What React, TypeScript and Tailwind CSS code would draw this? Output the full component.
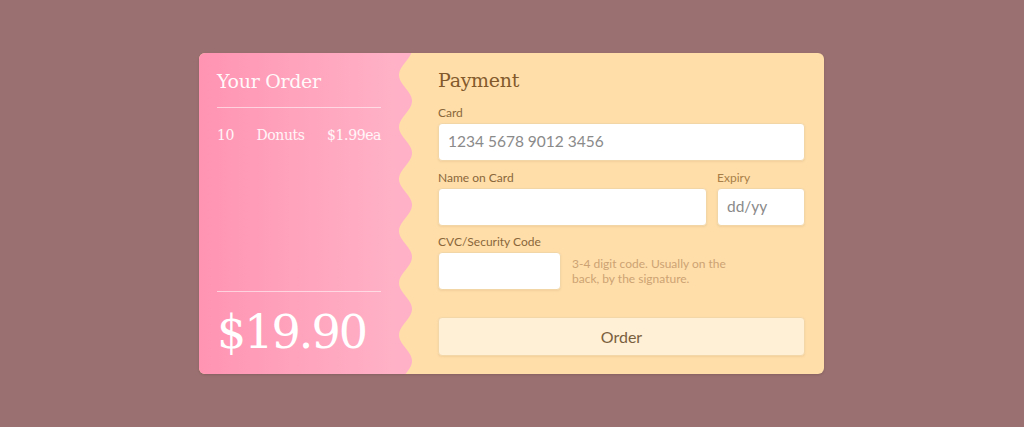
import React from "react";

function buildWave(height: number) {
  // pink edge, wavy; x between 1 and 14
  const P = 52;
  let d = "M0 0";
  for (let y = 0; y <= height; y += 1) {
    const x = 7.5 + 6.5 * Math.cos((2 * Math.PI * (y + 4)) / P);
    d += ` L${x.toFixed(2)} ${y}`;
  }
  d += ` L0 ${height} Z`;
  return d;
}

export default function App() {
  const H = 321;
  return (
    <div className="w-[1024px] h-[427px] bg-[#9a7070] pt-[53px] pl-[199px]">
      <div className="flex w-[625px] h-[321px] rounded-[6px] overflow-hidden bg-[#ffdeaa] shadow-sm">
        {/* ORDER SUMMARY */}
        <div className="w-[199px] h-full flex flex-col pl-[18px] pr-[17px] pt-[14px] pb-[14px] bg-gradient-to-r from-[#ff94b2] to-[#ffb2c7] font-['DejaVu_Serif',serif] text-white">
          <h1 className="text-[19px] leading-[28px] tracking-[-0.3px] text-white/95">
            Your Order
          </h1>
          <div className="mt-[12px] h-px bg-white/55" />
          <div className="mt-[17px] flex justify-between text-[14px] leading-[20px] text-white/90 tracking-[-0.4px]">
            <span>10</span>
            <span>Donuts</span>
            <span>$1.99ea</span>
          </div>
          <div className="flex-1" />
          <div className="h-px bg-white/55" />
          <div className="mt-[12px] text-[46px] leading-[56px] tracking-[-2px]">
            $19.90
          </div>
        </div>

        {/* WAVE EDGE */}
        <svg width="14" height={H} viewBox={`0 0 14 ${H}`} className="shrink-0 block">
          <path d={buildWave(H)} fill="#ffb2c7" />
        </svg>

        {/* PAYMENT */}
        <div className="flex-1 pl-[26px] pr-[19px] pt-[13px] font-['Lato',sans-serif]">
          <h2 className="font-['DejaVu_Serif',serif] text-[19px] leading-[28px] tracking-[-0.3px] text-[#835a2c]">
            Payment
          </h2>

          <Label className="mt-[11px]">Card</Label>
          <Input className="mt-[2px] w-full" placeholder="1234 5678 9012 3456" />

          <div className="mt-[9px] flex gap-[10px]">
            <div className="flex-1">
              <Label>Name on Card</Label>
              <Input className="mt-[2px] w-full" />
            </div>
            <div className="w-[88px]">
              <Label className="text-[#a87e48]">Expiry</Label>
              <Input className="mt-[2px] w-full" placeholder="dd/yy" />
            </div>
          </div>

          <Label className="mt-[8px]">CVC/Security Code</Label>
          <div className="mt-[2px] flex items-center gap-[11px]">
            <Input className="w-[123px]" />
            <p className="w-[170px] text-[12px] leading-[15px] text-[#cda373]">
              3-4 digit code. Usually on the back, by the signature.
            </p>
          </div>

          <button className="mt-[27px] w-full h-[39px] rounded-[4px] border border-[#f3d7a9] bg-[#fff0d6] text-[16px] text-[#7a5f3e] shadow-[0_1px_2px_rgba(180,130,60,0.15)]">
            Order
          </button>
        </div>
      </div>
    </div>
  );
}

/* ---------- SMALL UI HELPERS ---------- */

function Label({ children, className = "" }: { children: React.ReactNode; className?: string }) {
  return (
    <p className={`text-[12px] leading-[16px] text-[#8a673a] ${className}`}>
      {children}
    </p>
  );
}

function Input({ placeholder = "", className = "" }: { placeholder?: string; className?: string }) {
  return (
    <div
      className={`h-[38px] rounded-[4px] border border-[#f2d6a6] bg-white pl-[9px] flex items-center text-[15.5px] text-[#8a8a8a] shadow-[0_1px_2px_rgba(160,110,50,0.12)] ${className}`}
    >
      {placeholder}
    </div>
  );
}
